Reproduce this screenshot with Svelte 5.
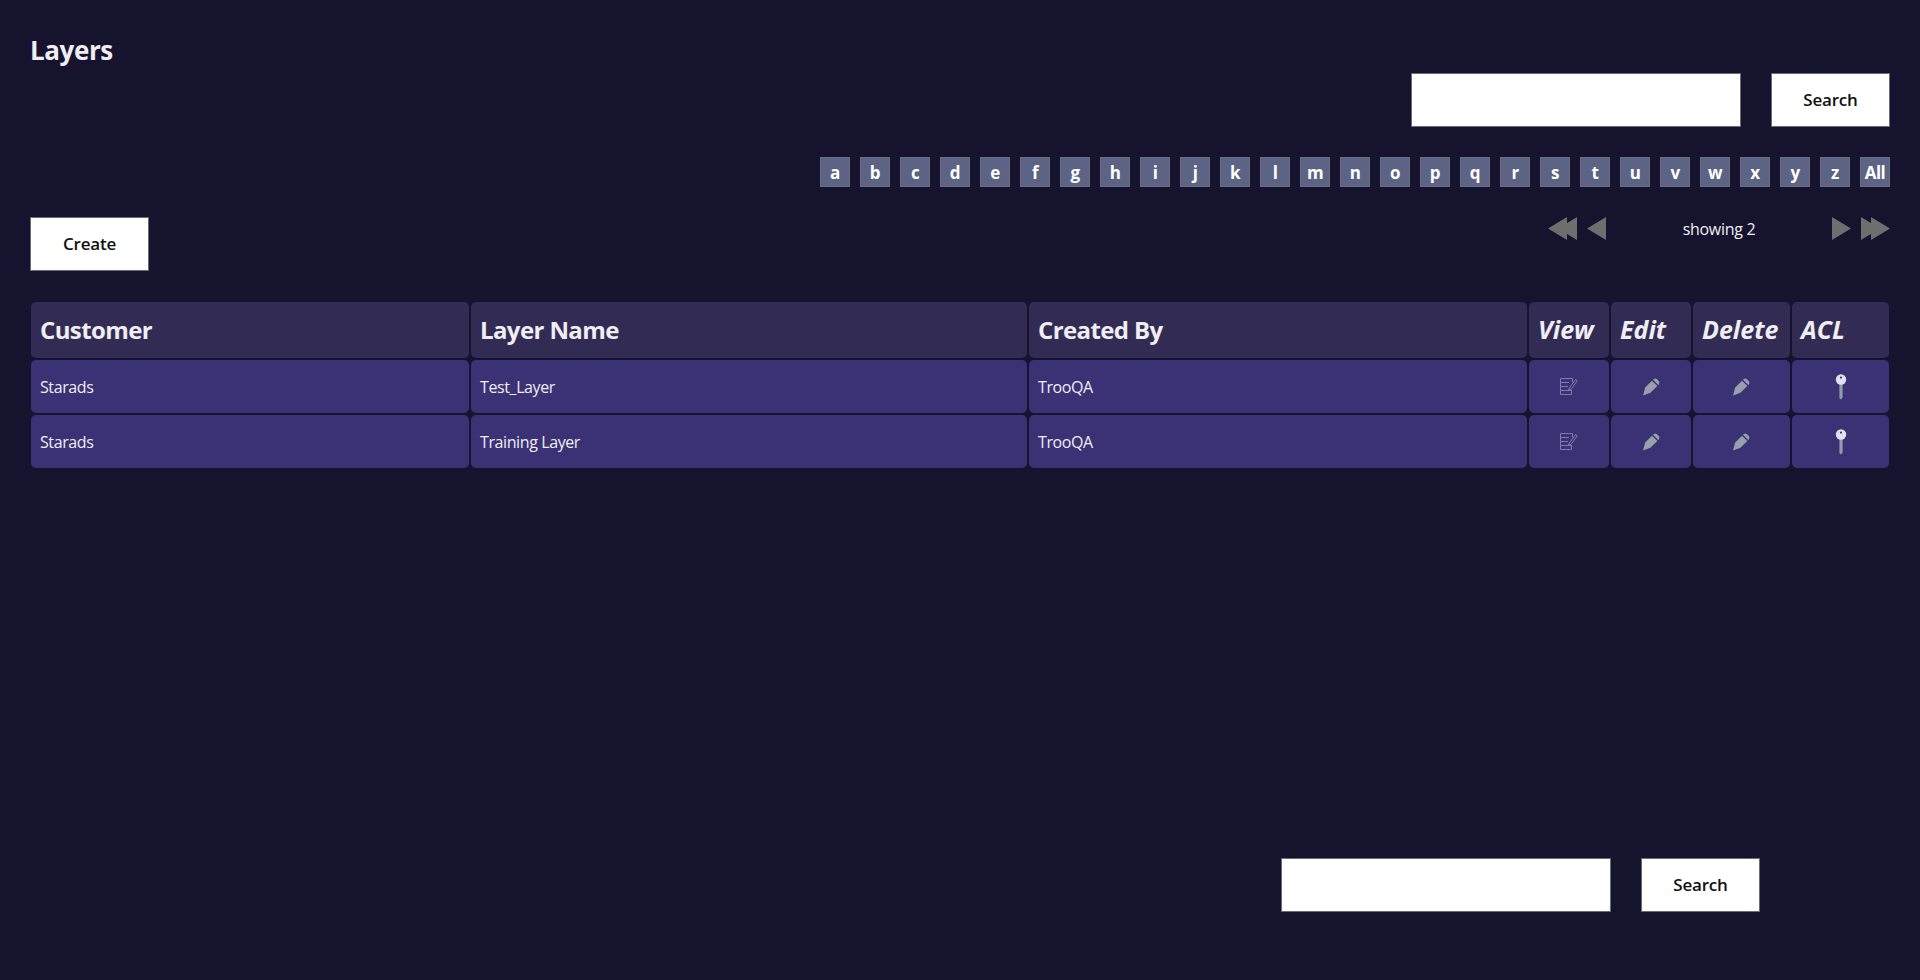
<script lang="ts">
  const letters = [...'abcdefghijklmnopqrstuvwxyz', 'All'];
  const columns = [
    { label: 'Customer' },
    { label: 'Layer Name' },
    { label: 'Created By' },
    { label: 'View', action: true },
    { label: 'Edit', action: true },
    { label: 'Delete', action: true },
    { label: 'ACL', action: true }
  ];
  const rows = [
    { customer: 'Starads', name: 'Test_Layer', by: 'TrooQA' },
    { customer: 'Starads', name: 'Training Layer', by: 'TrooQA' }
  ];
</script>

{#snippet pencil()}
  <svg class="lift" width="19" height="19" viewBox="0 0 18 18" aria-hidden="true">
    <path d="M1 17.5 L3 10 L9.5 3.5 L14.5 8.5 L8 15 Z" fill="#9aa0ab" />
    <path d="M10.4 2.6 L11.2 1.8 Q12.5 .8 14 2 L16 4 Q17 5.5 16 7 L15.4 7.6 Z" fill="#9aa0ab" />
  </svg>
{/snippet}

<main class="page">
  <h1>Layers</h1>

  <div class="search top">
    <input type="text" />
    <button>Search</button>
  </div>

  <nav class="letters">
    {#each letters as letter}
      <a href="#{letter}">{letter}</a>
    {/each}
  </nav>

  <div class="toolbar">
    <button>Create</button>
    <div class="pager">
      <svg class="double" width="29" height="23" viewBox="0 0 29 23" aria-hidden="true">
        <path d="M0 11.5 L19 0 V23 Z M10 11.5 L29 0 V23 Z" fill="#6e6e6e" />
      </svg>
      <svg class="single" width="19" height="23" viewBox="0 0 19 23" aria-hidden="true">
        <path d="M0 11.5 L19 0 V23 Z" fill="#6e6e6e" />
      </svg>
      <span class="count">showing 2</span>
      <svg class="single" width="19" height="23" viewBox="0 0 19 23" aria-hidden="true">
        <path d="M19 11.5 L0 0 V23 Z" fill="#6e6e6e" />
      </svg>
      <svg class="double" width="29" height="23" viewBox="0 0 29 23" aria-hidden="true">
        <path d="M19 11.5 L0 0 V23 Z M29 11.5 L10 0 V23 Z" fill="#6e6e6e" />
      </svg>
    </div>
  </div>

  <div class="grid">
    {#each columns as col}
      <div class="head" class:action={col.action}>{col.label}</div>
    {/each}
    {#each rows as row}
      <div class="cell">{row.customer}</div>
      <div class="cell">{row.name}</div>
      <div class="cell">{row.by}</div>
      <div class="cell icon">
        <svg class="lift" width="18" height="17" viewBox="0 0 18 17" fill="none" stroke="#7f7aae" aria-hidden="true">
          <path d="M12.5 4.5 V0.5 H0.5 V16.5 H11.5 V12" />
          <path d="M0.5 4.5 H9 M0.5 8.5 H8 M0.5 12.5 H11" />
          <path d="M9 10.5 L15.5 1.5 L17.2 2.8 L11 11.5 L8.6 12 Z" />
        </svg>
      </div>
      <div class="cell icon">{@render pencil()}</div>
      <div class="cell icon">{@render pencil()}</div>
      <div class="cell icon">
        <svg width="12" height="26" viewBox="0 0 12 26" aria-hidden="true">
          <path d="M4.4 9 H7.6 V23.5 L6 25.5 L4.4 24 Z" fill="#959ba6" />
          <circle cx="6" cy="5.5" r="5.2" fill="#dfe2ee" />
          <circle cx="6" cy="3.6" r="1.1" fill="#3b3275" />
        </svg>
      </div>
    {/each}
  </div>

  <div class="search bottom">
    <input type="text" />
    <button>Search</button>
  </div>
</main>

<style>
  :global(body) {
    background: #15132e;
    font-family: 'Open Sans', 'Noto Sans', sans-serif;
    color: #f0edf3;
  }

  .page {
    padding: 0 30px 40px;
  }

  h1 {
    margin: 0;
    padding-top: 32px;
    height: 41px;
    font-size: 26px;
    line-height: 36px;
    letter-spacing: -0.4px;
  }

  input,
  button {
    box-sizing: border-box;
    height: 54px;
    background: #fff;
    border: 1px solid #6b6b78;
    border-radius: 0;
    margin: 0;
  }

  input {
    width: 330px;
  }

  button {
    width: 119px;
    padding-bottom: 3px;
    font-family: inherit;
    font-size: 17px;
    font-weight: 600;
    letter-spacing: -0.2px;
    color: #111;
  }

  .search {
    display: flex;
    justify-content: flex-end;
    gap: 30px;
  }

  .letters {
    display: flex;
    justify-content: flex-end;
    gap: 10px;
    margin-top: 30px;
  }

  .letters a {
    box-sizing: border-box;
    width: 30px;
    height: 30px;
    display: flex;
    align-items: center;
    justify-content: center;
    background: #5d6384;
    border: 1px solid #6b6b7b;
    color: #fff;
    font-size: 17px;
    font-weight: 700;
    text-decoration: none;
    letter-spacing: -0.5px;
  }

  .toolbar {
    display: flex;
    justify-content: space-between;
    align-items: flex-start;
    margin-top: 30px;
  }

  .pager {
    display: flex;
    align-items: center;
    height: 23px;
  }

  .pager .double + .single,
  .pager .single + .double {
    margin-left: 10px;
  }

  .count {
    width: 226px;
    text-align: center;
    font-size: 16px;
    letter-spacing: -0.3px;
  }

  .grid {
    display: grid;
    grid-template-columns: 438px 556px 498px 80px 80px 97px 97px;
    grid-template-rows: 56px 53px 53px;
    gap: 2px;
    margin: 31px 0 0 1px;
  }

  .head,
  .cell {
    display: flex;
    align-items: center;
    padding: 0 9px;
    border-radius: 5px;
  }

  .head {
    padding-bottom: 2px;
    background: #322c54;
    font-size: 24px;
    font-weight: 700;
    letter-spacing: -0.6px;
  }

  .head.action {
    font-size: 25px;
    font-style: italic;
    letter-spacing: 0;
  }

  .cell {
    background: #3a3274;
    font-size: 16px;
    letter-spacing: -0.4px;
  }

  .cell.icon {
    justify-content: center;
  }

  .lift {
    margin-bottom: 1px;
  }

  .bottom {
    margin-top: 390px;
    padding-right: 130px;
  }
</style>
